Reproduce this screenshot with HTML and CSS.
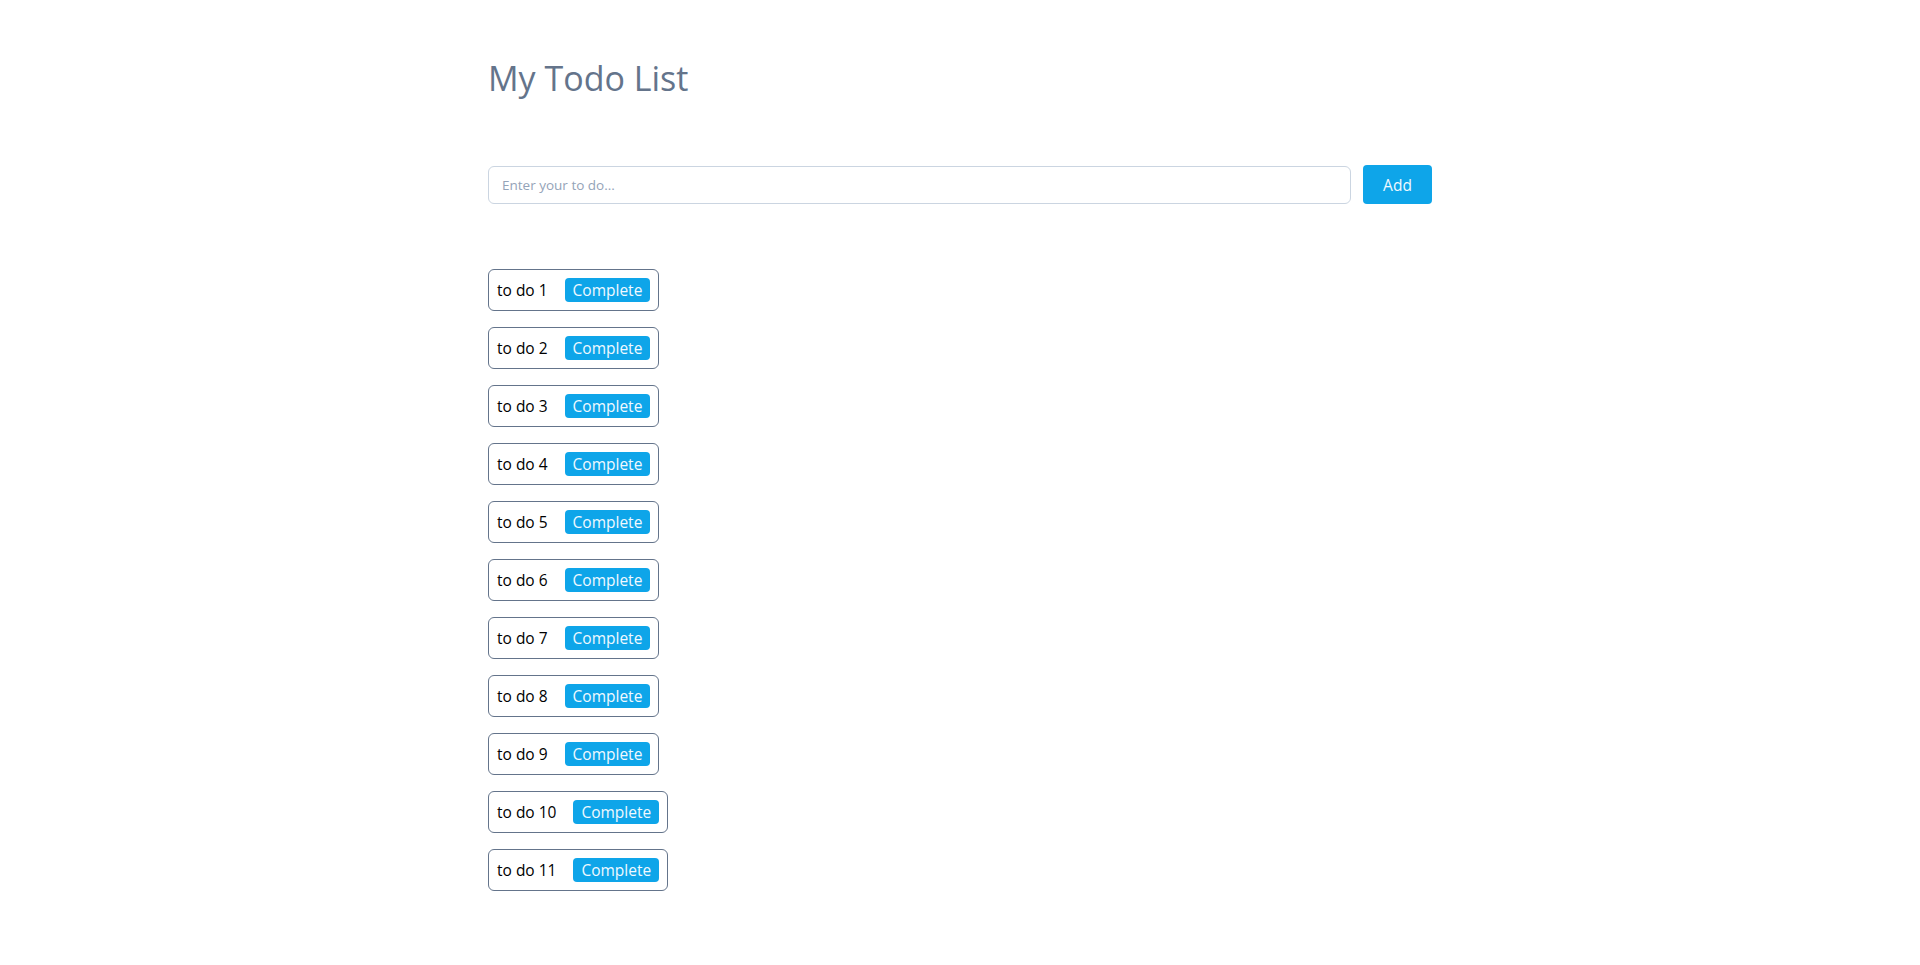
FILE: index.html
```html
<!DOCTYPE html>
<html lang="en">
<head>
<meta charset="utf-8">
<title>My Todo List</title>
<link rel="stylesheet" href="styles.css">
</head>
<body>
<main class="container">
  <h1 class="title">My Todo List</h1>
  <form class="add-form">
    <input class="add-input" type="text" placeholder="Enter your to do...">
    <button class="add-btn" type="button">Add</button>
  </form>
  <ul class="todo-list">
    <li class="todo-item"><span class="todo-text">to do 1</span><button class="complete-btn" type="button">Complete</button></li>
    <li class="todo-item"><span class="todo-text">to do 2</span><button class="complete-btn" type="button">Complete</button></li>
    <li class="todo-item"><span class="todo-text">to do 3</span><button class="complete-btn" type="button">Complete</button></li>
    <li class="todo-item"><span class="todo-text">to do 4</span><button class="complete-btn" type="button">Complete</button></li>
    <li class="todo-item"><span class="todo-text">to do 5</span><button class="complete-btn" type="button">Complete</button></li>
    <li class="todo-item"><span class="todo-text">to do 6</span><button class="complete-btn" type="button">Complete</button></li>
    <li class="todo-item"><span class="todo-text">to do 7</span><button class="complete-btn" type="button">Complete</button></li>
    <li class="todo-item"><span class="todo-text">to do 8</span><button class="complete-btn" type="button">Complete</button></li>
    <li class="todo-item"><span class="todo-text">to do 9</span><button class="complete-btn" type="button">Complete</button></li>
    <li class="todo-item"><span class="todo-text">to do 10</span><button class="complete-btn" type="button">Complete</button></li>
    <li class="todo-item"><span class="todo-text">to do 11</span><button class="complete-btn" type="button">Complete</button></li>
  </ul>
</main>
</body>
</html>
```

FILE: styles.css
```css
* { box-sizing: border-box; }

html, body {
  margin: 0;
  padding: 0;
  background: #ffffff;
}

body {
  font-family: "Open Sans", "Noto Sans", "Liberation Sans", sans-serif;
  color: #000000;
}

.container {
  width: 944px;
  margin: 0 auto;
  padding-top: 54px;
}

.title {
  margin: 0;
  font-size: 34px;
  line-height: 48px;
  font-weight: 400;
  color: #64748b;
}

.add-form {
  display: flex;
  align-items: center;
  gap: 12px;
  margin-top: 63px;
}

.add-input {
  flex: 1;
  height: 38px;
  border: 1px solid #cbd5e1;
  border-radius: 6px;
  padding: 0 13px;
  font-family: inherit;
  font-size: 13.5px;
  color: #334155;
  outline: none;
}

.add-input::placeholder {
  color: #94a3b8;
}

.add-btn {
  width: 69px;
  height: 39px;
  border: none;
  border-radius: 4px;
  background: #0ea5e9;
  color: #f0f9ff;
  font-family: inherit;
  font-size: 15.5px;
  padding: 0;
  cursor: pointer;
}

.todo-list {
  list-style: none;
  margin: 65px 0 0;
  padding: 0;
  display: flex;
  flex-direction: column;
  align-items: flex-start;
  gap: 16px;
}

.todo-item {
  display: flex;
  align-items: center;
  border: 1px solid #64748b;
  border-radius: 6px;
  padding: 8px;
}

.todo-text {
  font-size: 15.5px;
  line-height: 24px;
  margin-right: 17px;
}

.complete-btn {
  height: 24px;
  border: none;
  border-radius: 4px;
  background: #0ea5e9;
  color: #f0f9ff;
  font-family: inherit;
  font-size: 15.5px;
  line-height: 24px;
  padding: 0 8px;
  cursor: pointer;
}
```
